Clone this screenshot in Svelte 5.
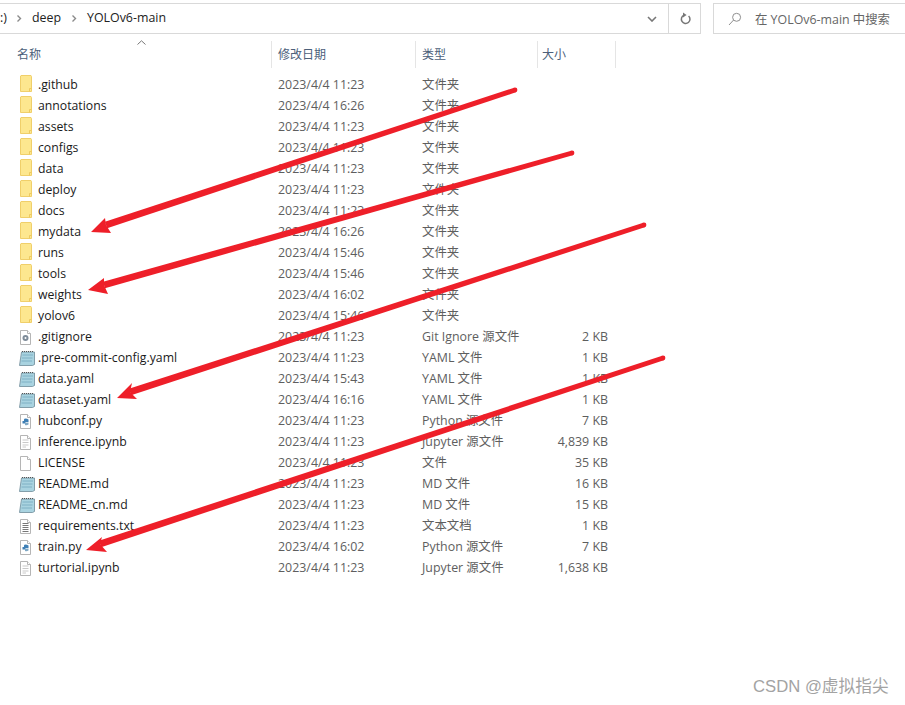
<script>
  const D='文件夹';
  const rows=[
    ['.github','2023/4/4 11:23',D,'','folder'],
    ['annotations','2023/4/4 16:26',D,'','folder'],
    ['assets','2023/4/4 11:23',D,'','folder'],
    ['configs','2023/4/4 11:23',D,'','folder'],
    ['data','2023/4/4 11:23',D,'','folder'],
    ['deploy','2023/4/4 11:23',D,'','folder'],
    ['docs','2023/4/4 11:23',D,'','folder'],
    ['mydata','2023/4/4 16:26',D,'','folder'],
    ['runs','2023/4/4 15:46',D,'','folder'],
    ['tools','2023/4/4 15:46',D,'','folder'],
    ['weights','2023/4/4 16:02',D,'','folder'],
    ['yolov6','2023/4/4 15:46',D,'','folder'],
    ['.gitignore','2023/4/4 11:23','Git Ignore 源文件','2 KB','gear'],
    ['.pre-commit-config.yaml','2023/4/4 11:23','YAML 文件','1 KB','note'],
    ['data.yaml','2023/4/4 15:43','YAML 文件','1 KB','note'],
    ['dataset.yaml','2023/4/4 16:16','YAML 文件','1 KB','note'],
    ['hubconf.py','2023/4/4 11:23','Python 源文件','7 KB','py'],
    ['inference.ipynb','2023/4/4 11:23','Jupyter 源文件','4,839 KB','lines'],
    ['LICENSE','2023/4/4 11:23','文件','35 KB','blank'],
    ['README.md','2023/4/4 11:23','MD 文件','16 KB','note'],
    ['README_cn.md','2023/4/4 11:23','MD 文件','15 KB','note'],
    ['requirements.txt','2023/4/4 11:23','文本文档','1 KB','text'],
    ['train.py','2023/4/4 16:02','Python 源文件','7 KB','py'],
    ['turtorial.ipynb','2023/4/4 11:23','Jupyter 源文件','1,638 KB','lines'],
  ];
  const arrows=[
    {s:[515,90],n:[106,225],h:'91,232 105,218 106,225 111,233'},
    {s:[572,153],n:[104,285],h:'88,290 104,278 104,285 108,294'},
    {s:[644,225],n:[130,392],h:'117,398 132,383 130,392 137,399'},
    {s:[663,358],n:[100,544],h:'86,550 102,537 100,544 107,552'},
  ].map(a=>{
    const dx=a.n[0]-a.s[0],dy=a.n[1]-a.s[1],len=Math.hypot(dx,dy);
    const px=-dy/len,py=dx/len,w0=2.4,w1=3.4;
    const shaft=[
      [a.s[0]+px*w0,a.s[1]+py*w0],[a.n[0]+px*w1,a.n[1]+py*w1],
      [a.n[0]-px*w1,a.n[1]-py*w1],[a.s[0]-px*w0,a.s[1]-py*w0]
    ].map(p=>p[0].toFixed(1)+','+p[1].toFixed(1)).join(' ');
    return {shaft,h:a.h,cx:a.s[0],cy:a.s[1],r:w0};
  });
</script>

<div class="page">
  <div class="toolbar">
    <div class="address">
      <div class="crumbs">
        <span class="crumb clip">:)</span>
        <svg class="sep" viewBox="0 0 6 9"><path d="M1.5 1.5 4.5 4.5 1.5 7.5" /></svg>
        <span class="crumb">deep</span>
        <svg class="sep" viewBox="0 0 6 9"><path d="M1.5 1.5 4.5 4.5 1.5 7.5" /></svg>
        <span class="crumb">YOLOv6-main</span>
      </div>
      <div class="drop">
        <svg viewBox="0 0 10 6"><path d="M1 1 5 5 9 1" /></svg>
      </div>
      <div class="refresh">
        <svg viewBox="0 0 12 13"><path d="M9.6 4A4.3 4.3 0 1 1 5 3.2" /><path class="fill" d="M4 .5 7.6 3 4 5.6Z" /></svg>
      </div>
    </div>
    <div class="search">
      <svg viewBox="0 0 14 14"><circle cx="8.6" cy="5.3" r="4" /><path d="M5.6 8 1 13" /></svg>
      <span>在 YOLOv6-main 中搜索</span>
    </div>
  </div>

  <div class="caret"><svg viewBox="0 0 9 5"><path d="M.5 4.5 4.5 .8 8.5 4.5" /></svg></div>

  <div class="head">
    <div class="h name">名称</div>
    <div class="h date">修改日期</div>
    <div class="h type">类型</div>
    <div class="h size">大小</div>
  </div>

  <div class="list">
    {#each rows as r}
      <div class="row">
        <div class="icon">
          {#if r[4]==='folder'}
            <svg viewBox="0 0 16 16" class="up"><path class="fo" d="M1.5 1V16.5H12.5V1.5L12 .5H2Z" /><path class="fo2" d="M10.5 16.5V13.5H12.5" /></svg>
          {:else if r[4]==='note'}
            <svg viewBox="0 0 16 16"><path class="nb" d="M2.5 2H15.5V14.5L13.5 15.5H.5Z" /><path class="nl" d="M3.5 5H14M3 8H13.5M2.5 11H13" /><path class="ns" d="M3 1.5H15" /></svg>
          {:else}
            <svg viewBox="0 0 16 16">
              <path class="doc" d="M1.5 1.5H8.5L11.5 4.5V15.5H1.5Z" />
              <path class="doc" d="M8.5 1.5V4.5H11.5" />
              {#if r[4]==='gear'}
                <circle class="gear" cx="6.5" cy="9" r="3" /><circle class="gearh" cx="6.5" cy="9" r="1" />
              {:else if r[4]==='py'}
                <path class="pyb" d="M6.5 5.5C4.5 5.5 5 7 5 8H3.5V10.5H6.5V9H9.5V6.5C8.5 5.7 7.5 5.5 6.5 5.5Z" />
                <path class="pyy" d="M9.5 9.5V11.5C8.5 12.3 7 12.3 6 12V9.8Z" />
              {:else if r[4]==='lines'}
                <path class="ln" d="M3.5 6H9.5M3.5 8.5H9.5M3.5 11H9.5M3.5 13H7" />
              {:else if r[4]==='text'}
                <path class="ld" d="M3.5 5.5H9.5M3.5 7.5H9.5M3.5 9.5H9.5M3.5 11.5H9.5M3.5 13.5H9.5" />
              {/if}
            </svg>
          {/if}
        </div>
        <div class="c name">{r[0]}</div>
        <div class="c date">{r[1]}</div>
        <div class="c type">{r[2]}</div>
        <div class="c size">{r[3]}</div>
      </div>
    {/each}
  </div>

  <svg class="arrows" viewBox="0 0 905 705">
    {#each arrows as a}
      <circle cx={a.cx} cy={a.cy} r={a.r} /><polygon points={a.shaft} /><polygon points={a.h} />
    {/each}
  </svg>

  <div class="mark">CSDN @虚拟指尖</div>
</div>

<style>
  :global(body){margin:0;background:#fff}
  .page{position:relative;width:905px;height:705px;overflow:hidden;background:#fff;color:#1a1a1a;font-family:"Open Sans","Noto Sans CJK SC",sans-serif;font-size:12.4px}
  .toolbar{display:flex;height:31px;padding-top:3px;gap:12px;box-sizing:content-box}
  .address{width:701px;display:flex;border:solid #d9d9d9;border-width:1px 1px 1px 0;box-sizing:border-box;height:31px;flex:none}
  .crumbs{flex:1;display:flex;align-items:center;font-size:12.4px;color:#222}
  .crumb{line-height:28px;margin-top:-1px}
  .clip{margin-right:9px}
  .sep{width:6px;height:9px;fill:none;stroke:#8a8a8a;stroke-width:1.4;margin:0 10px 0 0}
  .sep + .crumb{margin-right:10px}
  .drop{width:32px;display:flex;align-items:center;justify-content:center;border-right:1px solid #d9d9d9;padding-top:1px}
  .drop svg{width:10px;height:6px;fill:none;stroke:#777;stroke-width:1.6}
  .refresh{width:31px;display:flex;align-items:center;justify-content:center}
  .refresh svg{width:12px;height:13px;fill:none;stroke:#777;stroke-width:1.5}
  .refresh .fill{fill:#777;stroke:none}
  .search{flex:1;margin-right:-20px;display:flex;align-items:center;border:1px solid #d9d9d9;height:31px;box-sizing:border-box;padding-left:14px;color:#666}
  .search svg{width:14px;height:14px;fill:none;stroke:#8f8f8f;stroke-width:1;margin-right:13px;flex:none}
  .search span{white-space:nowrap}
  .caret{position:absolute;left:137px;top:40px;line-height:0}
  .caret svg{width:9px;height:5px;fill:none;stroke:#777;stroke-width:1}
  .head{display:flex;height:27px;margin-top:7px;align-items:center;color:#4c607a;font-size:12px}
  .h{height:27px;line-height:27px;box-sizing:border-box;border-right:1px solid #e5e5e5;padding-left:6px}
  .h.name{width:272px;padding-left:17px}
  .h.date{width:144px}
  .h.type{width:122px}
  .h.size{width:78px;padding-left:4px}
  .list{margin-top:6px}
  .row{display:flex;height:21px;line-height:21px;align-items:center;white-space:nowrap}
  .icon{width:38px;height:21px;padding-left:19px;box-sizing:border-box;display:flex;align-items:center;flex:none}
  .icon svg{width:16px;height:16px;display:block;overflow:visible}
  .up{margin-top:-3px}
  .c.name{width:240px;color:#1a1a1a;font-size:12.25px}
  .c.date{width:144px;color:#5e5e5e}
  .c.type{width:122px;color:#5e5e5e}
  .c.size{width:64px;text-align:right;color:#5e5e5e}
  .fo{fill:#fde78f;stroke:#f0cf6a;stroke-width:1}
  .fo2{fill:none;stroke:#eec95f;stroke-width:1}
  .nb{fill:#a9d3e0;stroke:#6d8a98;stroke-width:.8}
  .nl{stroke:#7fb0c4;stroke-width:1;fill:none}
  .ns{stroke:#555;stroke-width:1;stroke-dasharray:1 1;fill:none}
  .doc{fill:#fff;stroke:#b5b5b5;stroke-width:1}
  .gear{fill:#7f8c99}
  .gearh{fill:#fff}
  .pyb{fill:#3f7fb5}
  .pyy{fill:#7fa8c4}
  .ln{stroke:#c9c9c9;stroke-width:1;fill:none}
  .ld{stroke:#777;stroke-width:1;fill:none}
  .arrows{position:absolute;left:0;top:0;width:905px;height:705px;pointer-events:none}
  .arrows polygon,.arrows circle{fill:#ee1f29}
  .mark{position:absolute;left:753px;top:676px;font-family:"Liberation Sans","Noto Sans CJK SC",sans-serif;font-size:16.7px;color:#a3a3a3;white-space:nowrap;line-height:22px}
</style>
